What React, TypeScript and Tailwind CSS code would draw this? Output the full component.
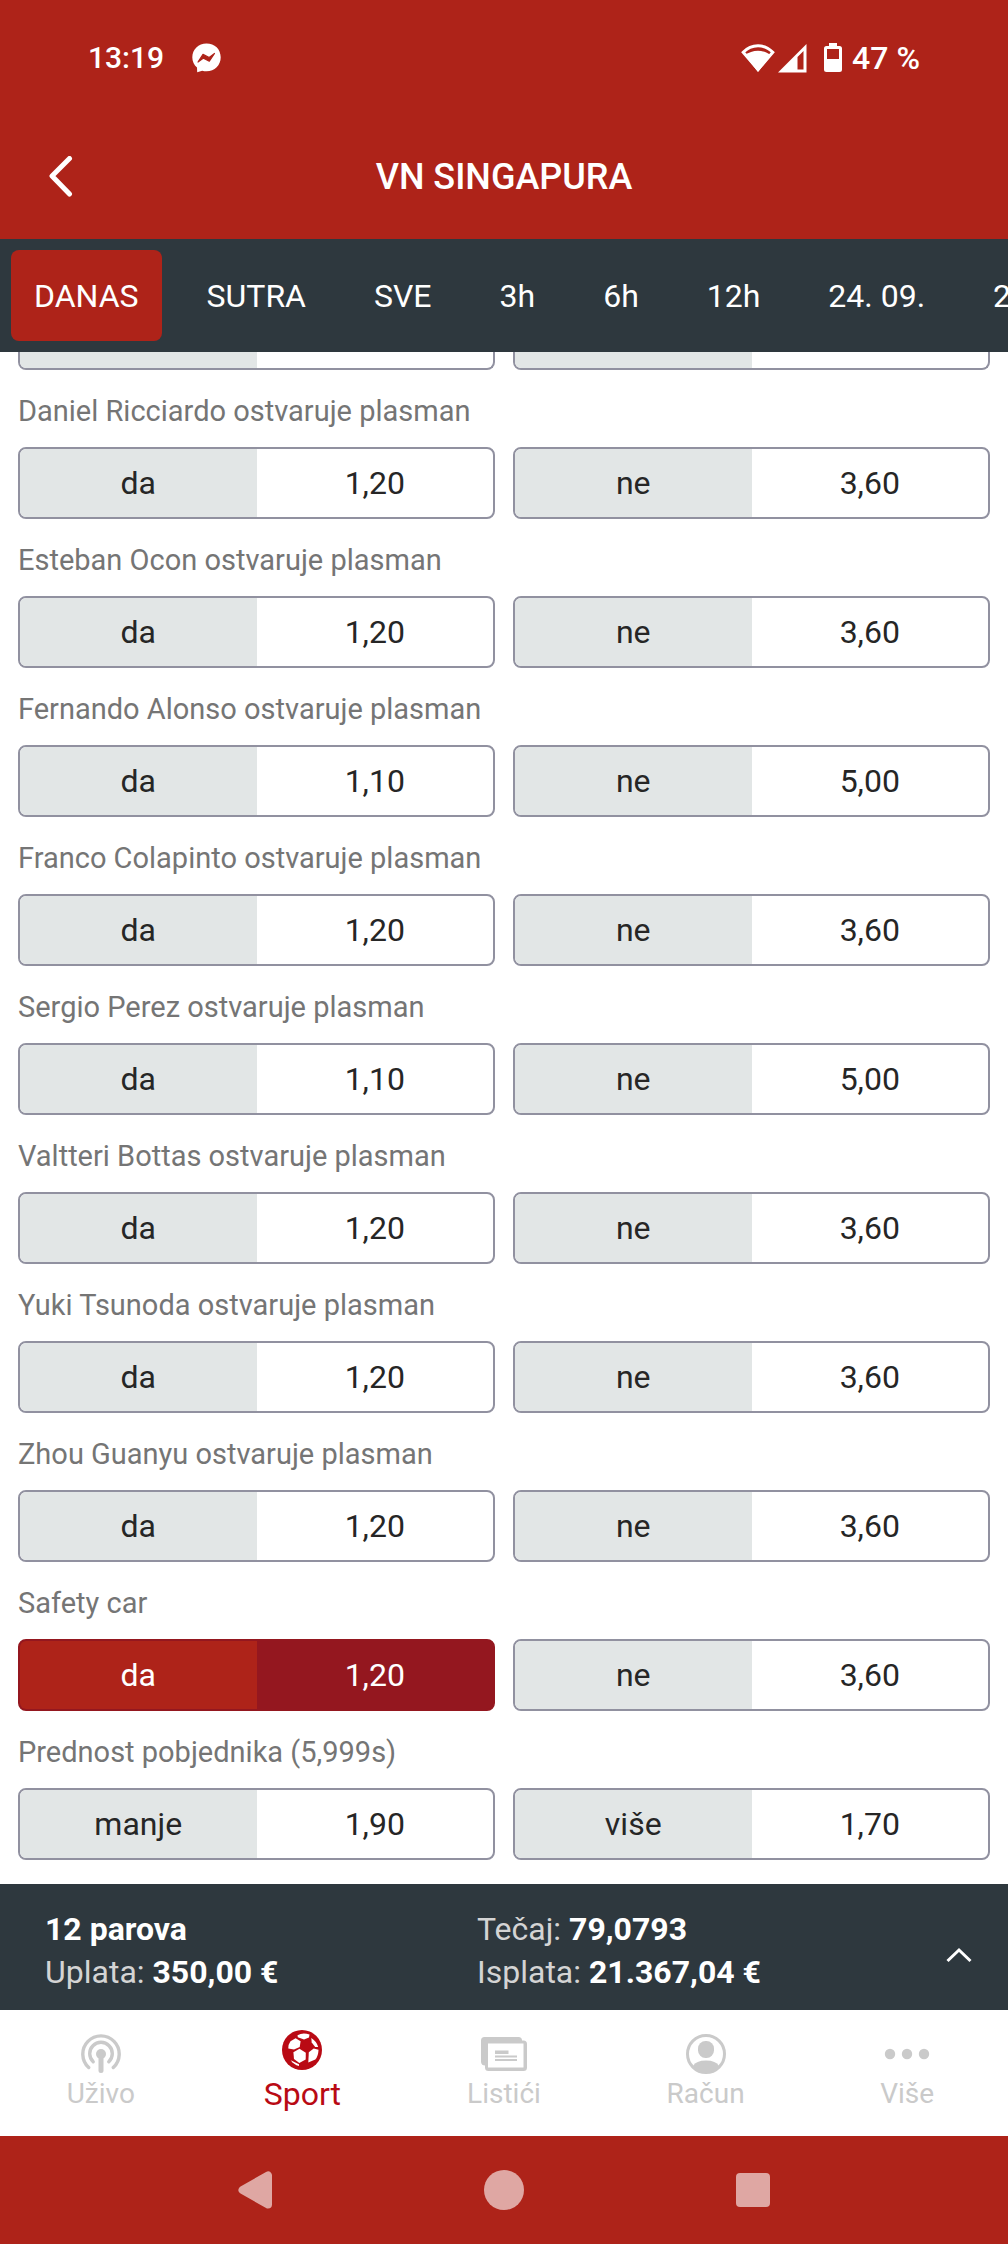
import React, { useState } from 'react';

type Market = {
  title: string;
  options: [string, string][];
};

const DAYS = ['DANAS', 'SUTRA', 'SVE', '3h', '6h', '12h', '24. 09.', '25. 09.'];

const MARKETS: Market[] = [
  { title: 'Daniel Ricciardo ostvaruje plasman', options: [['da', '1,20'], ['ne', '3,60']] },
  { title: 'Esteban Ocon ostvaruje plasman', options: [['da', '1,20'], ['ne', '3,60']] },
  { title: 'Fernando Alonso ostvaruje plasman', options: [['da', '1,10'], ['ne', '5,00']] },
  { title: 'Franco Colapinto ostvaruje plasman', options: [['da', '1,20'], ['ne', '3,60']] },
  { title: 'Sergio Perez ostvaruje plasman', options: [['da', '1,10'], ['ne', '5,00']] },
  { title: 'Valtteri Bottas ostvaruje plasman', options: [['da', '1,20'], ['ne', '3,60']] },
  { title: 'Yuki Tsunoda ostvaruje plasman', options: [['da', '1,20'], ['ne', '3,60']] },
  { title: 'Zhou Guanyu ostvaruje plasman', options: [['da', '1,20'], ['ne', '3,60']] },
  { title: 'Safety car', options: [['da', '1,20'], ['ne', '3,60']] },
  { title: 'Prednost pobjednika (5,999s)', options: [['manje', '1,90'], ['više', '1,70']] },
];

function StatusBar() {
  return (
    <div className="flex h-[115px] items-center justify-between px-[88px] font-medium">
      <div className="flex items-center gap-7">
        <span className="text-[30px]">13:19</span>
        <svg className="h-[30px] w-[30px]" viewBox="0 0 30 30" aria-hidden="true">
          <path fill="#fff" d="M14.500.5C6.500.5.3 6.400.3 14.300c0 4.200 1.800 7.800 4.700 10.300l.2 4.700 5-1.600c1.400.4 2.800.6 4.300.6 8.200 0 14.200-5.900 14.200-14S22.700.5 14.500.5z" />
          <path fill="#ae2319" stroke="#ae2319" strokeWidth="1.200" strokeLinejoin="round" d="M6 19l5-7.600 6.200 3.100 5.300-4-5.200 7.700-5.800-3.100z" />
        </svg>
      </div>
      <div className="flex items-center">
        <svg className="h-[30px] w-[34px]" viewBox="0 0 34 30" aria-hidden="true">
          <path fill="none" stroke="#fff" strokeWidth="3" strokeLinejoin="miter" d="M2.200 9.300C10.500.6 23.500.6 31.800 9.300L17 26.500z" />
          <path fill="#fff" d="M4 12.500C11 6.300 23 6.300 30 12.500L17 29z" />
        </svg>
        <svg className="ml-[3px] h-[30px] w-[29px]" viewBox="0 0 29 30" aria-hidden="true">
          <path fill="#fff" fillRule="evenodd" d="M0 29.500L28.500 1v28.500zM19.500 14v12.500h6V8z" />
        </svg>
        <svg className="ml-[16px] h-[30px] w-[20px]" viewBox="0 0 20 30" aria-hidden="true">
          <path fill="#fff" fillRule="evenodd" d="M6 0h8v3h2.500A2.500 2.500 0 0 1 19 5.500v21a2.500 2.500 0 0 1-2.500 2.500h-13A2.500 2.500 0 0 1 1 26.500v-21A2.500 2.500 0 0 1 3.500 3H6zM4 6v10h12V6z" />
        </svg>
        <span className="ml-[9px] text-[32px]">47 %</span>
      </div>
    </div>
  );
}

function OddButton({ label, odd, active, onClick }: { label: string; odd: string; active: boolean; onClick: () => void }) {
  return (
    <button
      type="button"
      aria-pressed={active}
      onClick={onClick}
      className={`grid h-[72px] grid-cols-2 overflow-hidden rounded-lg border-2 text-[32px] ${
        active ? 'border-[#94171f] bg-[#94171f] text-white' : 'border-[#9191a0] bg-white text-[#262626]'
      }`}
    >
      <span className={`flex items-center justify-center ${active ? 'bg-[#ae2319]' : 'bg-[#e2e6e6]'}`}>{label}</span>
      <span className="flex items-center justify-center">{odd}</span>
    </button>
  );
}

// Bottom edge of the row that is scrolled under the day tabs
function ScrolledRow() {
  return (
    <div className="grid grid-cols-2 gap-[18px]">
      {[0, 1].map(i => (
        <div key={i} className="grid h-[18px] grid-cols-2 overflow-hidden rounded-b-lg border-2 border-t-0 border-[#9191a0]">
          <div className="bg-[#e2e6e6]" />
        </div>
      ))}
    </div>
  );
}

function LiveIcon() {
  return (
    <svg className="h-10 w-10" viewBox="0 0 40 40" fill="none" stroke="currentColor" strokeLinecap="round" aria-hidden="true">
      <path strokeWidth="3.400" d="M7.700 33.500a18.200 18.200 0 1 1 24.600 0" />
      <path strokeWidth="3.400" d="M12.200 27.800a11.300 11.300 0 1 1 15.600 0" />
      <circle cx="20" cy="20" r="5" fill="currentColor" stroke="none" />
      <path strokeWidth="5" d="M20 21v15.500" />
    </svg>
  );
}

function BallIcon() {
  return (
    <svg className="h-10 w-10" viewBox="0 0 40 40" aria-hidden="true">
      <circle cx="20" cy="20" r="20" fill="currentColor" />
      <g fill="#fff">
        <path d="M15.500 5.200Q21 2 27.500 4.600L27 7.500L22 9.500L15.800 7.200z" />
        <path d="M8.500 11.200L13.600 8.200L18.600 11.300L17.700 17L12 19.500L6.300 18.500Q6 14.500 8.500 11.200z" />
        <path d="M29.300 8Q34.800 11.500 36.200 17L33.200 17L29.700 12.500z" />
        <path d="M17.500 18.800L23.800 22.700L23.700 29.500L17.300 33L12 29L11.400 22.200z" />
        <path d="M26.800 22.300L31.700 18.600L36.500 19.700Q36.300 26 33.300 29.600L26.300 32.500z" />
        <path d="M8.700 30.200L17 34.200L17 36Q11.500 34.500 8.700 30.200z" />
      </g>
    </svg>
  );
}

function SlipsIcon() {
  return (
    <svg className="h-10 w-[46px]" viewBox="0 0 46 40" aria-hidden="true">
      <path fill="currentColor" d="M3.500 3h34A3.500 3.500 0 0 1 41 6.500h1.500A3.500 3.500 0 0 1 46 10v23.500a3.500 3.500 0 0 1-3.500 3.500h-35A3.500 3.500 0 0 1 4 33.500V31.500A4 4 0 0 1 0 28V6.500A3.500 3.500 0 0 1 3.500 3z" />
      <path fill="#fff" d="M7 9.500h35.500v24H7z" />
      <path fill="currentColor" d="M14 16.500h13.500v3.500H14zM14 21.500h22v2H14zM14 25h22v2H14z" />
    </svg>
  );
}

function AccountIcon() {
  return (
    <svg className="h-10 w-10" viewBox="0 0 40 40" aria-hidden="true">
      <circle cx="20" cy="20" r="18.500" fill="none" stroke="currentColor" strokeWidth="3" />
      <rect x="12" y="7" width="16" height="17" rx="7.500" fill="currentColor" />
      <path fill="currentColor" d="M7 32Q10 26.500 20 26.500T33 32Q28 38.500 20 38.500T7 32z" />
    </svg>
  );
}

function MoreIcon() {
  return (
    <svg className="h-10 w-[46px]" viewBox="0 0 46 40" fill="currentColor" aria-hidden="true">
      <circle cx="6" cy="20" r="5.200" />
      <circle cx="23" cy="20" r="5.200" />
      <circle cx="40" cy="20" r="5.200" />
    </svg>
  );
}

const NAV = [
  { label: 'Uživo', icon: <LiveIcon /> },
  { label: 'Sport', icon: <BallIcon /> },
  { label: 'Listići', icon: <SlipsIcon /> },
  { label: 'Račun', icon: <AccountIcon /> },
  { label: 'Više', icon: <MoreIcon /> },
];

function App() {
  const [day, setDay] = useState('DANAS');
  const [picked, setPicked] = useState('Safety car/da');

  return (
    <div className="flex min-h-screen flex-col bg-white font-['Roboto',sans-serif]">
      <header className="bg-[#ae2319] text-white">
        <StatusBar />
        <div className="grid h-[124px] grid-cols-[112px_1fr_112px] items-center">
          <button type="button" aria-label="Natrag" className="flex h-full items-center pl-[48px]">
            <svg className="h-[42px] w-[26px]" viewBox="0 0 26 42" fill="none" stroke="currentColor" strokeWidth="5" strokeLinecap="round" strokeLinejoin="round" aria-hidden="true">
              <path d="M21.500 2.500L4 20l17.500 18" />
            </svg>
          </button>
          <h1 className="text-center text-[36px] font-medium">VN SINGAPURA</h1>
        </div>
      </header>

      <nav className="flex gap-[22px] overflow-hidden bg-[#2e383e] p-[11px]">
        {DAYS.map(d => (
          <button
            key={d}
            type="button"
            onClick={() => setDay(d)}
            className={`h-[91px] shrink-0 rounded-lg px-[23px] text-[32px] whitespace-nowrap text-white ${d === day ? 'bg-[#ae2319]' : ''}`}
          >
            {d}
          </button>
        ))}
      </nav>

      <main className="flex-1 px-[18px] pb-6">
        <ScrolledRow />
        {MARKETS.map(market => (
          <section key={market.title}>
            <h2 className="flex h-[77px] items-center pt-[6px] text-[29px] text-[#757575]">{market.title}</h2>
            <div className="grid grid-cols-2 gap-[18px]">
              {market.options.map(([label, odd]) => {
                const id = `${market.title}/${label}`;
                return <OddButton key={id} label={label} odd={odd} active={picked === id} onClick={() => setPicked(id)} />;
              })}
            </div>
          </section>
        ))}
      </main>

      <div className="flex h-[126px] items-center bg-[#2e383e] pt-2 pl-[45px] text-[32px] leading-[43px] text-[#d4d4d4]">
        <div className="grid flex-1 grid-cols-2">
          <div>
            <p className="font-bold text-white">12 parova</p>
            <p>Uplata: <b className="text-white">350,00 €</b></p>
          </div>
          <div>
            <p>Tečaj: <b className="text-white">79,0793</b></p>
            <p>Isplata: <b className="text-white">21.367,04 €</b></p>
          </div>
        </div>
        <button type="button" aria-label="Otvori listić" className="flex h-16 w-[99px] items-center justify-center pt-2 text-white">
          <svg className="h-4 w-[26px]" viewBox="0 0 26 16" fill="none" stroke="currentColor" strokeWidth="3" aria-hidden="true">
            <path d="M1.500 14L13 3l11.500 11" />
          </svg>
        </button>
      </div>

      <nav className="grid h-[126px] grid-cols-5">
        {NAV.map(({ label, icon }) => (
          <a
            key={label}
            href="#"
            className={`flex flex-col items-center ${label === 'Sport' ? 'pt-5 text-[32px] leading-[48px] text-[#b90a14]' : 'pt-6 text-[28px] leading-[40px] text-[#cacaca]'}`}
          >
            {icon}
            {label}
          </a>
        ))}
      </nav>

      <div className="flex h-[108px] items-center justify-center gap-[209px] bg-[#ae2319] text-[#dfa7a3]">
        <button type="button" aria-label="Nazad">
          <svg className="h-10 w-10" viewBox="0 0 40 40" fill="currentColor" stroke="currentColor" strokeWidth="8" strokeLinejoin="round" aria-hidden="true">
            <path d="M33 5.500v29L7.500 20z" />
          </svg>
        </button>
        <button type="button" aria-label="Početni zaslon">
          <svg className="h-10 w-10" viewBox="0 0 40 40" fill="currentColor" aria-hidden="true">
            <circle cx="20" cy="20" r="20" />
          </svg>
        </button>
        <button type="button" aria-label="Nedavne aplikacije">
          <svg className="h-10 w-10" viewBox="0 0 40 40" fill="currentColor" aria-hidden="true">
            <rect x="3" y="3" width="34" height="34" rx="4" />
          </svg>
        </button>
      </div>
    </div>
  );
}

export default App;
